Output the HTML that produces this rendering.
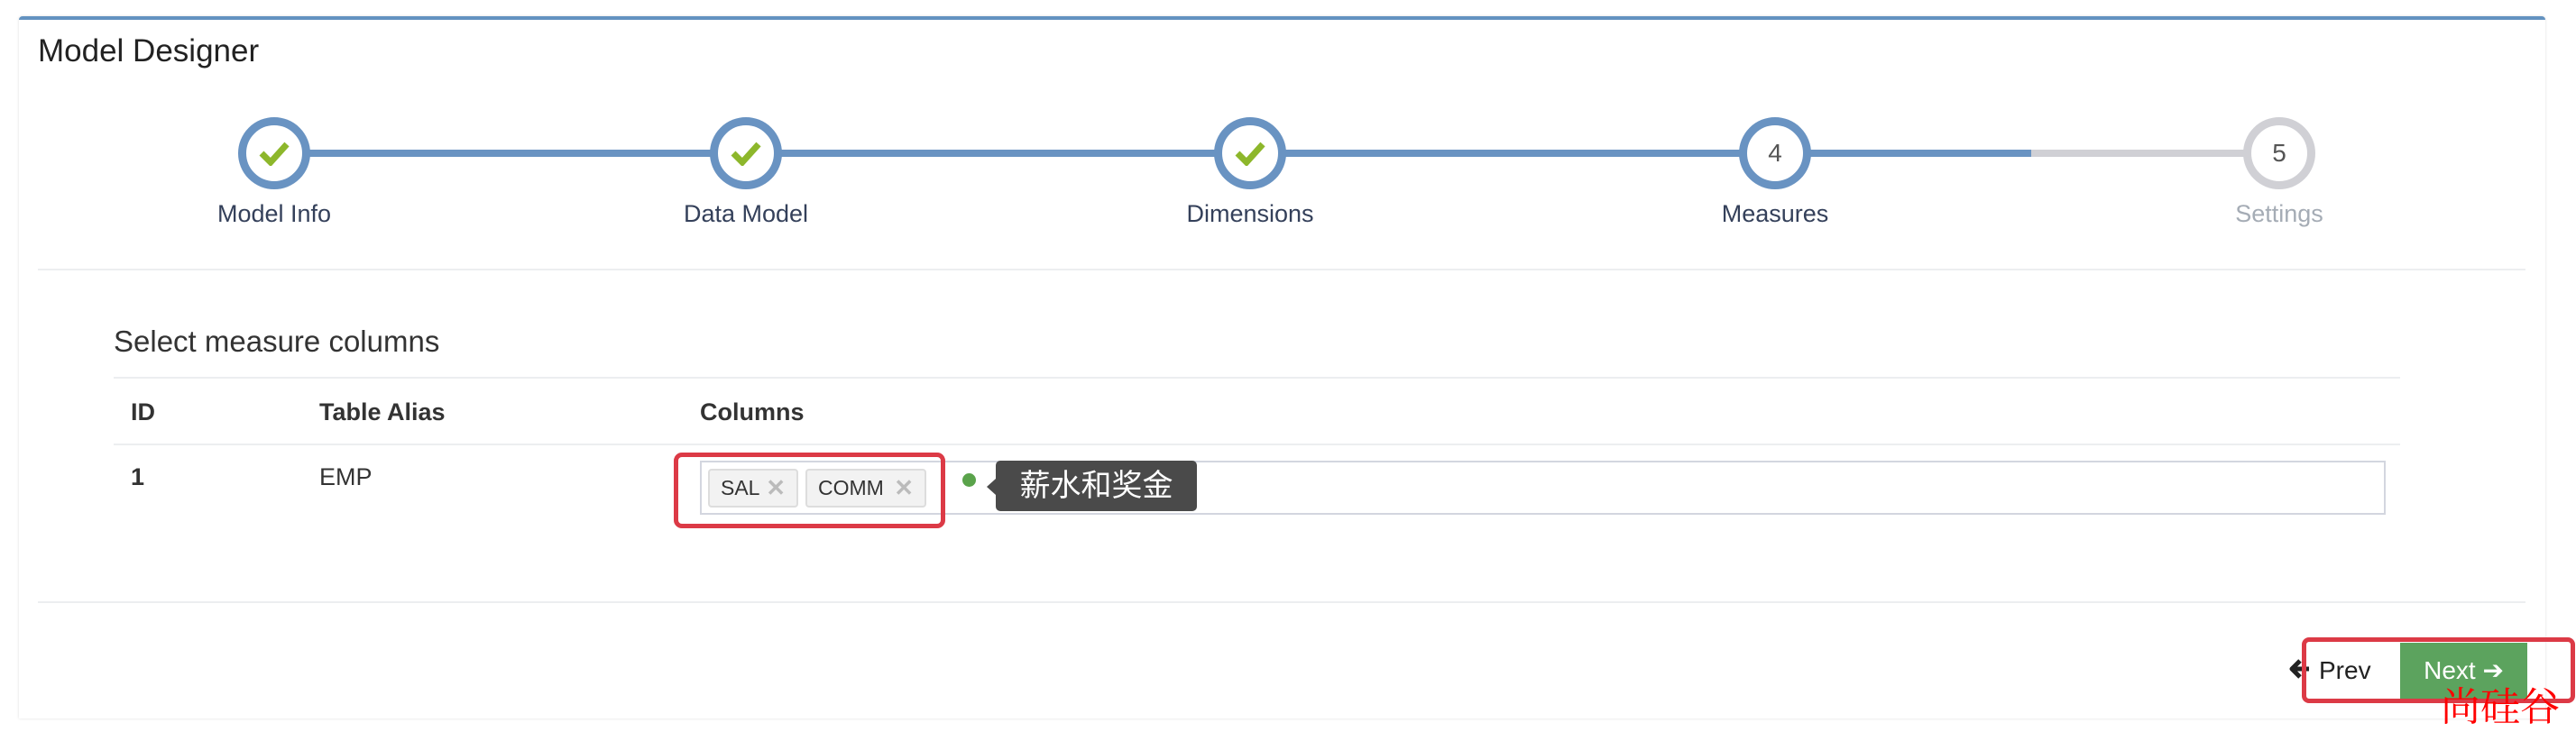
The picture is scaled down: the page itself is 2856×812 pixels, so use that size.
<!DOCTYPE html>
<html><head><meta charset="utf-8"><style>
*{margin:0;padding:0;box-sizing:border-box}
body{width:2856px;height:806px;background:#fff;font-family:"Liberation Sans","Noto Sans CJK SC",sans-serif;position:relative;overflow:hidden;color:#333}
.a{position:absolute}
.panel{left:21px;top:18px;width:2801px;height:779px;border-top:4px solid #6392c0;border-radius:4px 4px 0 0;box-shadow:0 0 3px #ddd;background:#fff}
.circ{width:80px;height:80px;border-radius:50%;border:9px solid #6993c2;background:#fff;display:flex;align-items:center;justify-content:center;font-size:28px;color:#555}
.lbl{font-size:27px;color:#34405a;width:300px;text-align:center;top:222px}
.hr{height:2px;background:#eceef0}
.th{font-size:27px;font-weight:bold;top:442px}
.td{font-size:27px;top:514px}
.tag{top:520px;height:43px;background:#f2f2f2;border:2px solid #ddd;border-radius:4px;font-size:23px;color:#333;line-height:39px;padding-left:12px}
.tag b{color:#bbb;font-weight:bold;font-size:26px;position:absolute;right:12px}
</style></head><body>
<div class="a panel"></div>
<div class="a" style="left:42px;top:37px;font-size:35px;color:#222">Model Designer</div>
<div class="a" style="left:304px;top:166px;width:1948px;height:8px;background:#6993c2"></div>
<div class="a" style="left:2252px;top:166px;width:275px;height:8px;background:#d0d0d5"></div>
<div class="a circ" style="left:264px;top:130px"><svg width="34" height="28" viewBox="0 0 34 28"><path d="M3 14 L13 24 L31 4" stroke="#8db72b" stroke-width="7" fill="none"/></svg></div>
<div class="a circ" style="left:787px;top:130px"><svg width="34" height="28" viewBox="0 0 34 28"><path d="M3 14 L13 24 L31 4" stroke="#8db72b" stroke-width="7" fill="none"/></svg></div>
<div class="a circ" style="left:1346px;top:130px"><svg width="34" height="28" viewBox="0 0 34 28"><path d="M3 14 L13 24 L31 4" stroke="#8db72b" stroke-width="7" fill="none"/></svg></div>
<div class="a circ" style="left:1928px;top:130px">4</div>
<div class="a circ" style="left:2487px;top:130px;border-color:#d0d0d5">5</div>
<div class="a lbl" style="left:154px">Model Info</div>
<div class="a lbl" style="left:677px">Data Model</div>
<div class="a lbl" style="left:1236px">Dimensions</div>
<div class="a lbl" style="left:1818px">Measures</div>
<div class="a lbl" style="left:2377px;color:#a5acb5">Settings</div>
<div class="a hr" style="left:42px;top:298px;width:2758px"></div>
<div class="a" style="left:126px;top:360px;font-size:33px;color:#333">Select measure columns</div>
<div class="a hr" style="left:126px;top:418px;width:2535px"></div>
<div class="a th" style="left:145px">ID</div>
<div class="a th" style="left:354px">Table Alias</div>
<div class="a th" style="left:776px">Columns</div>
<div class="a hr" style="left:126px;top:492px;width:2535px"></div>
<div class="a td" style="left:145px;font-weight:bold">1</div>
<div class="a td" style="left:354px">EMP</div>
<div class="a" style="left:776px;top:511px;width:1869px;height:60px;border:2px solid #d3d6df"></div>
<div class="a tag" style="left:785px;width:100px">SAL<b>✕</b></div>
<div class="a tag" style="left:893px;width:134px">COMM<b>✕</b></div>
<div class="a" style="left:747px;top:502px;width:301px;height:84px;border:5px solid #dc3a46;border-radius:9px"></div>
<div class="a" style="left:1067px;top:525px;width:15px;height:15px;border-radius:50%;background:#5aa34b"></div>
<div class="a" style="left:1094px;top:531px;width:0;height:0;border:9px solid transparent;border-right:10px solid #4a4a4a;border-left:0"></div>
<div class="a" style="left:1104px;top:511px;width:223px;height:56px;background:#4a4a4a;border-radius:5px;color:#fff;font-size:34px;line-height:56px;text-align:center">薪水和奖金</div>
<div class="a hr" style="left:42px;top:667px;width:2758px"></div>
<svg class="a" style="left:2538px;top:731px" width="24" height="22" viewBox="0 0 24 22"><path d="M12 2 L3 11 L12 20 M3 11 H22" stroke="#222" stroke-width="5" fill="none" stroke-linejoin="round"/></svg>
<div class="a" style="left:2571px;top:728px;font-size:28px;color:#222">Prev</div>
<div class="a" style="left:2661px;top:713px;width:141px;height:62px;background:#5ca35e;color:#fff;font-size:28px;line-height:62px;text-align:center">Next ➔</div>
<div class="a" style="left:2552px;top:707px;width:303px;height:73px;border:5px solid #dc3a46;border-radius:8px"></div>
<div class="a" style="left:2706px;top:756px;font-size:44px;color:#f00;font-family:'Noto Serif CJK SC',serif;line-height:48px">尚硅谷</div>
</body></html>
